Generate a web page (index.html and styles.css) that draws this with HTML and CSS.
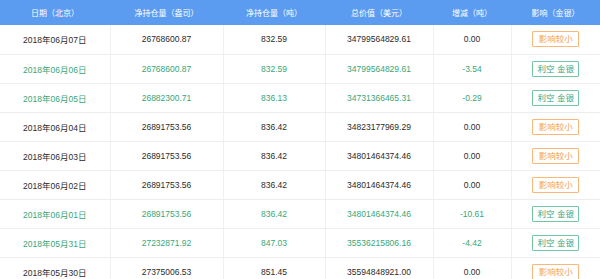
FILE: index.html
```html
<!DOCTYPE html>
<html lang="zh-CN">
<head>
  <meta charset="UTF-8">
  <title>SPDR 黄金持仓</title>
  <link rel="stylesheet" href="styles.css">
</head>
<body>
  <table class="gold-table">
    <colgroup>
      <col class="c-date">
      <col class="c-oz">
      <col class="c-ton">
      <col class="c-val">
      <col class="c-chg">
      <col class="c-eff">
    </colgroup>
    <thead>
      <tr>
        <th>日期（北京）</th>
        <th>净持仓量（盎司）</th>
        <th>净持仓量（吨）</th>
        <th>总价值（美元）</th>
        <th>增减（吨）</th>
        <th>影响（金银）</th>
      </tr>
    </thead>
    <tbody>
      <tr>
        <td>2018年06月07日</td><td>26768600.87</td><td>832.59</td><td>34799564829.61</td><td>0.00</td>
        <td><span class="tag small">影响较小</span></td>
      </tr>
      <tr class="up">
        <td>2018年06月06日</td><td>26768600.87</td><td>832.59</td><td>34799564829.61</td><td>-3.54</td>
        <td><span class="tag bear">利空 金银</span></td>
      </tr>
      <tr class="up">
        <td>2018年06月05日</td><td>26882300.71</td><td>836.13</td><td>34731366465.31</td><td>-0.29</td>
        <td><span class="tag bear">利空 金银</span></td>
      </tr>
      <tr>
        <td>2018年06月04日</td><td>26891753.56</td><td>836.42</td><td>34823177969.29</td><td>0.00</td>
        <td><span class="tag small">影响较小</span></td>
      </tr>
      <tr>
        <td>2018年06月03日</td><td>26891753.56</td><td>836.42</td><td>34801464374.46</td><td>0.00</td>
        <td><span class="tag small">影响较小</span></td>
      </tr>
      <tr>
        <td>2018年06月02日</td><td>26891753.56</td><td>836.42</td><td>34801464374.46</td><td>0.00</td>
        <td><span class="tag small">影响较小</span></td>
      </tr>
      <tr class="up">
        <td>2018年06月01日</td><td>26891753.56</td><td>836.42</td><td>34801464374.46</td><td>-10.61</td>
        <td><span class="tag bear">利空 金银</span></td>
      </tr>
      <tr class="up">
        <td>2018年05月31日</td><td>27232871.92</td><td>847.03</td><td>35536215806.16</td><td>-4.42</td>
        <td><span class="tag bear">利空 金银</span></td>
      </tr>
      <tr>
        <td>2018年05月30日</td><td>27375006.53</td><td>851.45</td><td>35594848921.00</td><td>0.00</td>
        <td><span class="tag small">影响较小</span></td>
      </tr>
    </tbody>
  </table>
</body>
</html>
```

FILE: styles.css
```css
* {
  margin: 0;
  padding: 0;
  box-sizing: border-box;
}

body {
  background: #fff;
  font-family: "Liberation Sans", "Noto Sans CJK SC", sans-serif;
  overflow: hidden;
}

.gold-table {
  width: 600px;
  table-layout: fixed;
  border-collapse: collapse;
}

.c-date { width: 110px; }
.c-oz { width: 113px; }
.c-ton { width: 102px; }
.c-val { width: 108px; }
.c-chg { width: 78px; }
.c-eff { width: 89px; }

.gold-table th {
  height: 25px;
  background: #5b9cf1;
  color: #fff;
  font-size: 8px;
  font-weight: normal;
  text-align: center;
}

.gold-table td {
  height: 29px;
  font-size: 8.5px;
  color: #2b2b2b;
  text-align: center;
  border-bottom: 1px solid #ededed;
  border-left: 1px solid #f0f0f0;
}

.gold-table td:first-child {
  border-left: none;
}

.gold-table tr.up td {
  color: #38a678;
}

.tag {
  display: inline-block;
  width: 47px;
  height: 16px;
  line-height: 14px;
  font-size: 8.5px;
  border: 1px solid;
  border-radius: 1px;
}

.tag.small {
  color: #f8a24e;
  border-color: #f9b77a;
}

.tag.bear {
  color: #3aa57c;
  border-color: #72c6a3;
}
```
